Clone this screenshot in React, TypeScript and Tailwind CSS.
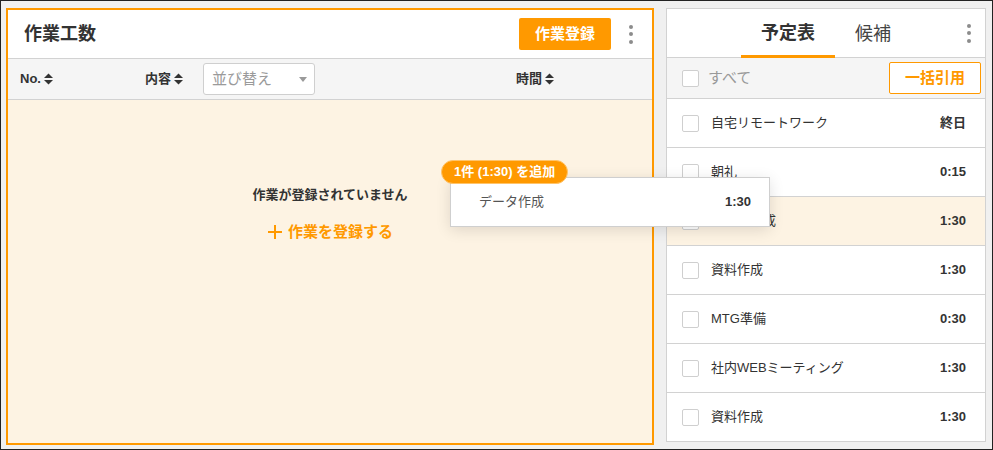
const rows = [
    { name: "自宅リモートワーク", time: "終日" },
    { name: "朝礼", time: "0:15" },
    { name: "データ作成", time: "1:30", active: true },
    { name: "資料作成", time: "1:30" },
    { name: "MTG準備", time: "0:30" },
    { name: "社内WEBミーティング", time: "1:30" },
    { name: "資料作成", time: "1:30" },
];

const SortIcon = () => (
    <svg width="9" height="12" viewBox="0 0 9 12" className="ml-[3px] shrink-0">
        <path d="M0 5 L4.5 0.5 L9 5 Z" fill="#333" />
        <path d="M0 7 L9 7 L4.5 11.5 Z" fill="#333" />
    </svg>
);

const Kebab = () => (
    <div className="w-[24px] flex flex-col items-center gap-[3.5px]">
        <span className="block w-[4px] h-[4px] rounded-full bg-[#8c8c8c]" />
        <span className="block w-[4px] h-[4px] rounded-full bg-[#8c8c8c]" />
        <span className="block w-[4px] h-[4px] rounded-full bg-[#8c8c8c]" />
    </div>
);

const Checkbox = () => (
    <span className="block w-[17px] h-[17px] shrink-0 border border-[#cfcfcf] rounded-[2px] bg-white" />
);

export default function App() {
    return (
        <div className="relative w-[993px] h-[450px] border border-[#222] bg-[#f0f0f0] flex items-start gap-[12px] pl-[5px] pt-[7px] font-['Liberation_Sans','Noto_Sans_CJK_JP',sans-serif] text-[#333]">
            {/* 作業工数 panel */}
            <div className="w-[648px] h-[437px] border-2 border-[#ff9900] bg-white flex flex-col">
                <div className="h-[48px] flex items-center pl-[16px] pr-[9px] border-b border-[#d2d2d2] box-content">
                    <h1 className="text-[18px] font-bold leading-none">作業工数</h1>
                    <button className="ml-auto w-[92px] h-[32px] rounded-[2px] bg-[#ff9900] text-white text-[15px] font-bold">
                        作業登録
                    </button>
                    <div className="ml-[8px]">
                        <Kebab />
                    </div>
                </div>

                <div className="h-[40px] flex items-center pl-[12px] bg-[#f5f5f5] border-b border-[#d2d2d2] box-content text-[13px] font-bold">
                    <div className="w-[125px] flex items-center">
                        No.
                        <SortIcon />
                    </div>
                    <div className="flex items-center">
                        内容
                        <SortIcon />
                    </div>
                    <div className="ml-[20px] w-[112px] h-[32px] border border-[#cfcfcf] rounded-[3px] bg-white flex items-center pl-[8px] pr-[7px] text-[15px] font-normal text-[#9a9a9a]">
                        並び替え
                        <svg width="8" height="5" viewBox="0 0 8 5" className="ml-auto">
                            <path d="M0 0 L8 0 L4 5 Z" fill="#9a9a9a" />
                        </svg>
                    </div>
                    <div className="ml-[201px] flex items-center">
                        時間
                        <SortIcon />
                    </div>
                </div>

                <div className="flex-1 bg-[#fdf3e3] flex flex-col items-center pt-[85px]">
                    <p className="text-[13px] font-bold leading-[20px]">作業が登録されていません</p>
                    <button className="mt-[17px] flex items-center text-[#ff9900] text-[15px] font-bold leading-[20px]">
                        <svg width="16" height="16" viewBox="0 0 16 16" className="mr-[5px]">
                            <path d="M8 1 V15 M1 8 H15" stroke="#ff9900" strokeWidth="2" />
                        </svg>
                        作業を登録する
                    </button>
                </div>
            </div>

            {/* 予定表 panel */}
            <div className="w-[320px] border border-[#d2d2d2] bg-white flex flex-col">
                <div className="h-[48px] flex items-stretch border-b border-[#d2d2d2] box-content pr-[4px]">
                    <div className="ml-[74px] flex">
                        <div className="px-[20px] flex items-center border-b-[3px] border-[#ff9900] -mb-px pt-[3px] text-[18px] font-bold">
                            予定表
                        </div>
                        <div className="px-[20px] flex items-center pt-[3px] text-[18px] text-[#444]">
                            候補
                        </div>
                    </div>
                    <div className="ml-auto flex items-center">
                        <Kebab />
                    </div>
                </div>

                <div className="h-[40px] flex items-center pl-[15px] pr-[4px] bg-[#f5f5f5] border-b border-[#d2d2d2] box-content">
                    <Checkbox />
                    <span className="ml-[9px] text-[15px] text-[#999]">すべて</span>
                    <button className="ml-auto w-[92px] h-[32px] border border-[#ff9900] rounded-[2px] bg-white text-[#ff9900] text-[15px] font-bold">
                        一括引用
                    </button>
                </div>

                {rows.map((row, i) => (
                    <div
                        key={i}
                        className={`h-[48px] box-content flex items-center pl-[15px] pr-[19px] text-[13px] ${
                            i < rows.length - 1 ? "border-b border-[#d2d2d2]" : ""
                        } ${row.active ? "bg-[#fdf3e3]" : ""}`}
                    >
                        <Checkbox />
                        <span className="ml-[12px]">{row.name}</span>
                        <span className="ml-auto font-bold">{row.time}</span>
                    </div>
                ))}
            </div>

            {/* drag ghost */}
            <div className="absolute left-[449px] top-[176px] w-[320px] h-[50px] bg-white border border-[#cfcfcf] shadow-[0_3px_14px_rgba(0,0,0,0.12)] flex items-center pl-[28px] pr-[18px] text-[13px]">
                <span className="text-[#555]">データ作成</span>
                <span className="ml-auto font-bold">1:30</span>
            </div>
            <div className="absolute left-[440px] top-[159px] h-[24px] px-[12px] rounded-full bg-[#ff9900] border border-[#ffc46b] flex items-center text-white text-[13px] font-bold">
                1件 (1:30) を追加
            </div>
        </div>
    );
}
